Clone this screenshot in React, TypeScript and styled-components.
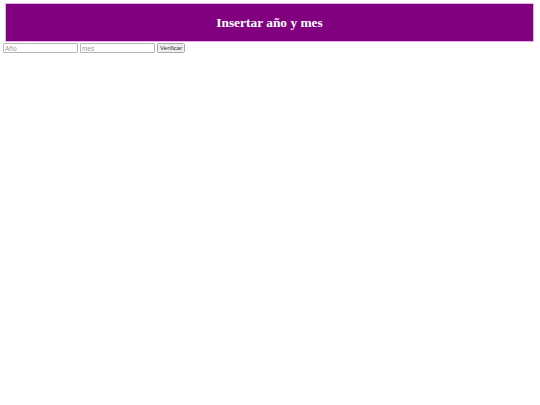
import React from "react";
import styled, { createGlobalStyle } from "styled-components";

const GlobalStyle = createGlobalStyle`
    html, body {
        margin: 0;
        padding: 0;
        background: #fff;
    }
`;

const Page = styled.div`
    padding: 3px 6px 0 3px;
`;

const Header = styled.div`
    margin-left: 2px;
    height: 39px;
    box-sizing: border-box;
    background-color: #800080;
    border: 1px solid #e3b4e3;
    display: flex;
    align-items: center;
    justify-content: center;
`;

const Title = styled.h1`
    margin: 0;
    font-family: "Liberation Serif", "Times New Roman", serif;
    font-weight: bold;
    font-size: 13.4px;
    color: #fff;
`;

const Form = styled.form`
    display: flex;
    align-items: center;
    gap: 2px;
    margin-top: 1px;
`;

const Field = styled.input`
    width: 75px;
    height: 10px;
    box-sizing: border-box;
    margin: 0;
    padding: 0 1px;
    border: 1px solid #b5b5b5;
    border-radius: 1px;
    font-family: "Liberation Sans", Arial, sans-serif;
    font-size: 6.5px;
    color: #222;
    outline: none;

    &::placeholder {
        color: #9a9a9a;
    }
`;

const Button = styled.button`
    height: 10px;
    box-sizing: border-box;
    margin: 0;
    padding: 0 2px;
    border: 1px solid #a8a8a8;
    border-radius: 1.5px;
    background-color: #efefef;
    font-family: "Liberation Sans", Arial, sans-serif;
    font-size: 6.2px;
    color: #333;
    line-height: 1;
`;

export default function App() {
    return (
        <>
            <GlobalStyle />
            <Page>
                <Header>
                    <Title>Insertar año y mes</Title>
                </Header>
                <Form onSubmit={(e) => e.preventDefault()}>
                    <Field type="text" placeholder="Año" />
                    <Field type="text" placeholder="mes" />
                    <Button type="submit">Verificar</Button>
                </Form>
            </Page>
        </>
    );
}
